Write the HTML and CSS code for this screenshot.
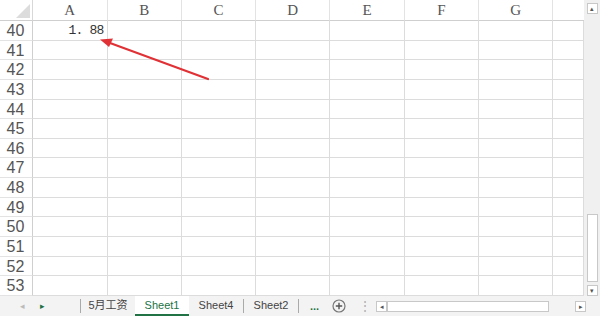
FILE: index.html
```html
<!DOCTYPE html>
<html lang="zh-CN">
<head>
    <meta charset="UTF-8">
    <title>Sheet1</title>
    <link rel="stylesheet" href="styles.css">
</head>
<body>
    <div class="window">
        <div class="main">
            <div class="sheet">
                <div class="grid" id="grid"></div>
                <svg class="arrow" width="600" height="296" viewBox="0 0 600 296">
                    <line x1="208" y1="79" x2="110" y2="43" stroke="#e03236" stroke-width="2.2" stroke-linecap="round"/>
                    <polygon points="100,39.5 113,38.5 109,47" fill="#e03236"/>
                </svg>
            </div>
            <div class="vscroll">
                <div class="sbtn">&#9652;</div>
                <div class="vtrack"><div class="vthumb"></div></div>
                <div class="sbtn">&#9662;</div>
            </div>
        </div>
        <div class="tabbar">
            <div class="nav">
                <span class="nav-prev">&#9666;</span>
                <span class="nav-next">&#9656;</span>
            </div>
            <span class="sep"></span>
            <div class="tab">5月工资</div>
            <div class="tab active">Sheet1</div>
            <div class="tab">Sheet4</div>
            <span class="sep"></span>
            <div class="tab">Sheet2</div>
            <span class="sep"></span>
            <span class="more">...</span>
            <span class="add">
                <svg width="14" height="14" viewBox="0 0 14 14">
                    <circle cx="7" cy="7" r="6" fill="none" stroke="#777" stroke-width="1.2"/>
                    <path d="M7 3.8v6.4M3.8 7h6.4" stroke="#555" stroke-width="1.4"/>
                </svg>
            </span>
            <span class="dots">&#8942;</span>
            <div class="hscroll">
                <div class="sbtn">&#9666;</div>
                <div class="hthumb"></div>
                <div class="htrack"></div>
                <div class="sbtn">&#9656;</div>
            </div>
        </div>
    </div>

    <script>
        let grid = document.getElementById('grid');
        let cols = ['A', 'B', 'C', 'D', 'E', 'F', 'G', ''];

        let html = '<div class="corner"><span class="tri"></span></div>';
        cols.forEach(function(c) {
            html += '<div class="colhead">' + c + '</div>';
        });
        for (let r = 40; r <= 53; r++) {
            html += '<div class="rowhead">' + r + '</div>';
            cols.forEach(function(c) {
                let text = (r === 40 && c === 'A') ? '1. 88' : '';
                html += '<div class="cell">' + text + '</div>';
            });
        }
        grid.innerHTML = html;
    </script>
</body>
</html>
```

FILE: styles.css
```css
* {
    box-sizing: border-box;
    margin: 0;
    padding: 0;
}
body {
    width: 600px;
    height: 316px;
    overflow: hidden;
    background: #fff;
    font-family: "Liberation Sans", Arial, sans-serif;
}
.window {
    display: flex;
    flex-direction: column;
    height: 316px;
}
.main {
    display: flex;
    height: 296px;
}
.sheet {
    position: relative;
    width: 584px;
    overflow: hidden;
}
.grid {
    display: grid;
    grid-template-columns: 33px 74.5px 74.3px 74.3px 74.3px 74.3px 74.3px 74.3px 30.5px;
    grid-template-rows: 21px repeat(14, 19.65px);
}
.corner {
    position: relative;
    border-right: 1px solid #d8d8d8;
    border-bottom: 1px solid #cfcfcf;
}
.tri {
    position: absolute;
    right: 2px;
    bottom: 2px;
    width: 0;
    height: 0;
    border-left: 14px solid transparent;
    border-bottom: 14px solid #dcdcdc;
}
.colhead {
    border-right: 1px solid #e3e3e3;
    border-bottom: 1px solid #cfcfcf;
    text-align: center;
    font-family: "Liberation Serif", serif;
    font-size: 15px;
    line-height: 21px;
    color: #555;
}
.colhead:nth-child(9) {
    border-right: none;
}
.rowhead {
    border-right: 1px solid #cfcfcf;
    border-bottom: 1px solid #e3e3e3;
    font-family: "Liberation Sans", Arial, sans-serif;
    font-size: 16px;
    line-height: 19px;
    text-align: center;
    padding-right: 1px;
    color: #555;
}
.cell {
    border-right: 1px solid #dcdcdc;
    border-bottom: 1px solid #dcdcdc;
    text-align: right;
    padding-right: 3px;
    font-family: "Liberation Mono", monospace;
    font-size: 13px;
    letter-spacing: -0.8px;
    line-height: 19px;
    color: #333;
}
.arrow {
    position: absolute;
    left: 0;
    top: 0;
}
.vscroll {
    width: 16px;
    background: #f0f0f0;
    display: flex;
    flex-direction: column;
    align-items: center;
    padding: 3px 0 0;
}
.sbtn {
    flex: none;
    width: 11px;
    height: 11px;
    border: 1px solid #c8c8c8;
    background: #fff;
    font-size: 7px;
    line-height: 9px;
    text-align: center;
    color: #555;
}
.vtrack {
    flex: 1;
    display: flex;
    flex-direction: column;
    justify-content: flex-end;
    padding-bottom: 3px;
}
.vthumb {
    width: 11px;
    height: 68px;
    border: 1px solid #c8c8c8;
    background: #fff;
}
.tabbar {
    height: 20px;
    background: #f3f3f3;
    display: flex;
    align-items: center;
    font-size: 11px;
    color: #444;
    white-space: nowrap;
}
.nav {
    flex: none;
    width: 80px;
    display: flex;
    gap: 15px;
    padding-left: 20px;
    font-size: 9px;
}
.nav-prev {
    color: #bbb;
}
.nav-next {
    color: #1e7145;
}
.sep {
    flex: none;
    width: 1px;
    height: 14px;
    background: #aaa;
}
.tab {
    flex: none;
    width: 54px;
    height: 20px;
    line-height: 19px;
    text-align: center;
    font-family: "Liberation Sans", "Noto Sans CJK SC", sans-serif;
}
.tab.active {
    background: #fff;
    color: #217346;
    border-bottom: 2px solid #217346;
}
.more {
    margin-left: 11px;
    color: #217346;
    font-weight: bold;
    font-size: 11px;
    line-height: 12px;
}
.add {
    display: flex;
    margin-left: 13px;
}
.dots {
    margin-left: 13px;
    color: #aaa;
    font-size: 12px;
}
.hscroll {
    flex: none;
    margin-left: 5px;
    width: 210px;
    display: flex;
    align-items: center;
}
.hthumb {
    width: 162px;
    height: 11px;
    border: 1px solid #c8c8c8;
    background: #fff;
}
.htrack {
    flex: 1;
}
```
